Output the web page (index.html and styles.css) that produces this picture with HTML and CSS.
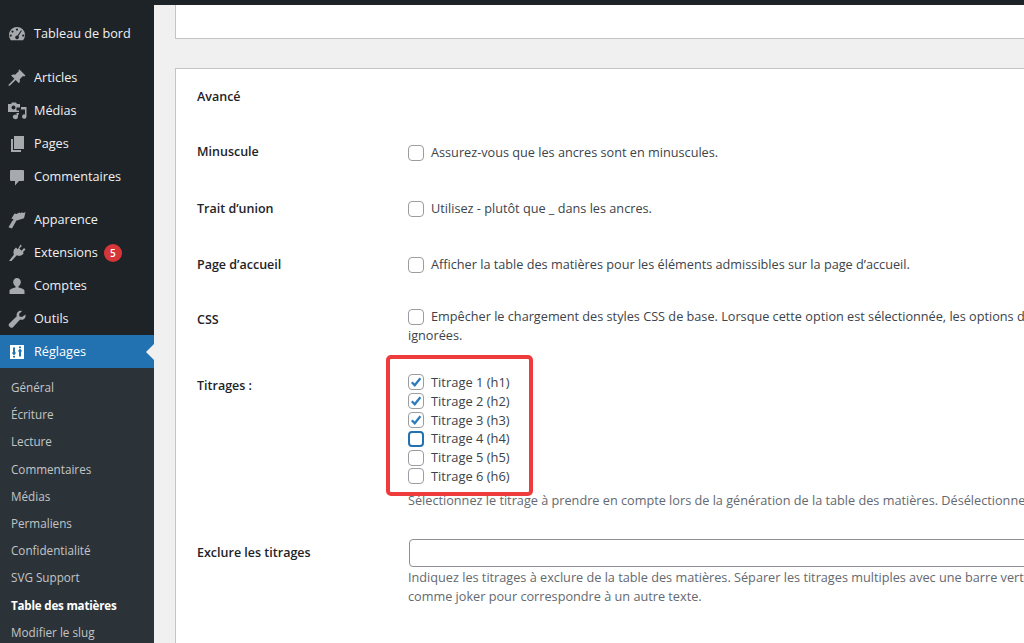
FILE: index.html
```html
<!DOCTYPE html>
<html>

	<head>
		<meta charset="UTF-8">
		<title>Table des matières</title>
		<link rel="stylesheet" href="styles.css">
	</head>

	<body>
		<div class="topBar"></div>
		<div class="wrap">
			<div class="sideMenu">
				<div class="menuGroup">
					<div class="menuItem">
						<svg class="menuIcon" viewBox="0 0 20 20"><path d="M10 3a8 8 0 0 0-8 8c0 2 .7 3.800 1.900 5.200h12.200A8 8 0 0 0 18 11a8 8 0 0 0-8-8zM10 4.500a1.100 1.100 0 1 1 0 2.200 1.100 1.100 0 0 1 0-2.200zM5.500 6.500a1.100 1.100 0 1 1 0 2.200 1.100 1.100 0 0 1 0-2.200zM3.800 10.500a1.100 1.100 0 1 1 0 2.200 1.100 1.100 0 0 1 0-2.200zM16.200 10.500a1.100 1.100 0 1 1 0 2.200 1.100 1.100 0 0 1 0-2.200zM14 6.200l.9.600-3.400 5.300a1.900 1.900 0 1 1-1-.600z" fill-rule="evenodd"/></svg>
						<span>Tableau de bord</span>
					</div>
				</div>
				<div class="menuGroup">
					<div class="menuItem">
						<svg class="menuIcon" viewBox="0 0 20 20"><path d="M12.500 1.500l6 6-1.300 1.100-1.200-.6-3.300 3.300c.5 1.600.2 3-.8 4l-3.300-3.300-5.600 5.600-1.500.3.300-1.500 5.600-5.600-3.300-3.300c1-1 2.400-1.300 4-.8L12 3.100l-.6-1.200z"/></svg>
						<span>Articles</span>
					</div>
					<div class="menuItem">
						<svg class="menuIcon" viewBox="0 0 20 20"><path d="M1 3h3l1-1.500h4L10 3h3v3.500H9.500v3H12V11H1zM6.500 4.500a2 2 0 1 0 0 4 2 2 0 0 0 0-4zM8 18a2.200 2.200 0 1 1 1.500-3.800V12H12v1.500h-1v2.300A2.200 2.200 0 0 1 8 18zM14 6h5.500v9.500a2.200 2.200 0 1 1-1.500-2.100V8.500h-4z" fill-rule="evenodd"/></svg>
						<span>Médias</span>
					</div>
					<div class="menuItem">
						<svg class="menuIcon" viewBox="0 0 20 20"><path d="M7 2h10v13H7zM4 5h2v11h8v2H4z"/></svg>
						<span>Pages</span>
					</div>
					<div class="menuItem">
						<svg class="menuIcon" viewBox="0 0 20 20"><path d="M4 3h12a1 1 0 0 1 1 1v9a1 1 0 0 1-1 1h-4l-4 4.500V14H4a1 1 0 0 1-1-1V4a1 1 0 0 1 1-1z"/></svg>
						<span>Commentaires</span>
					</div>
				</div>
				<div class="menuGroup">
					<div class="menuItem">
						<svg class="menuIcon" viewBox="0 0 20 20"><path d="M7.500 3.500l2 .5 3-1.500 1 .8 1.500-1 1 .7 2.500-.8-1.500 6-8 2.500-.5 1.800-2.800-1 .8-2-2-1zM5.500 10.500l3.200 1.200L5 18.500l-3.500-1.300z"/></svg>
						<span>Apparence</span>
					</div>
					<div class="menuItem">
						<svg class="menuIcon" viewBox="0 0 20 20"><path d="M13.500 1.500l1.400 1.400-2.600 2.600 2.200 2.200 2.600-2.600 1.400 1.400-2.700 2.700 1 1-1 1c-1.800 1.800-4 2.100-6 1L4.500 18H2l5-6.500C6 9.500 6.300 7.300 8 5.500l1-1 1.800 1.700z"/></svg>
						<span>Extensions</span>
						<span class="countBadge">5</span>
					</div>
					<div class="menuItem">
						<svg class="menuIcon" viewBox="0 0 20 20"><path d="M10 2a3.800 3.800 0 0 1 3.800 4c0 2-1 3.500-2.300 4.300v1.300c3 .6 6 1.700 6 3.400V18h-15v-3c0-1.700 3-2.800 6-3.400v-1.300C7.200 9.500 6.200 8 6.200 6A3.800 3.800 0 0 1 10 2z"/></svg>
						<span>Comptes</span>
					</div>
					<div class="menuItem">
						<svg class="menuIcon" viewBox="0 0 20 20"><path d="M18.500 5.500c.4 2-.3 3.600-1.500 4.500-1.200.9-2.600 1-3.900.6L6 18.200c-.8.800-2 .8-2.800 0l-1-1c-.8-.8-.7-2 .1-2.800l7.500-7.100c-.4-1.300-.3-2.700.6-3.900C11.400 2.200 13 1.500 15 2l-3 3 .5 2.500 2.500.5z"/></svg>
						<span>Outils</span>
					</div>
					<div class="menuItem current">
						<svg class="menuIcon" viewBox="0 0 20 20"><path d="M3 3h14v14H3zM6 5.500v5H4.800L7 13.800l2.200-3.300H8v-5zM6 14v1.500h2V14zM12 14.500v-5h-1.200L13 6.200l2.200 3.300H14v5zM12 4.500V6h2V4.500z" fill-rule="evenodd"/></svg>
						<span>Réglages</span>
					</div>
				</div>
				<div class="subMenu">
					<div class="subItem">Général</div>
					<div class="subItem">Écriture</div>
					<div class="subItem">Lecture</div>
					<div class="subItem">Commentaires</div>
					<div class="subItem">Médias</div>
					<div class="subItem">Permaliens</div>
					<div class="subItem">Confidentialité</div>
					<div class="subItem">SVG Support</div>
					<div class="subItem active">Table des matières</div>
					<div class="subItem">Modifier le slug</div>
				</div>
			</div>

			<div class="content">
				<div class="card topCard"></div>
				<div class="card mainCard">
					<div class="cardTitle">Avancé</div>

					<div class="row rowTall">
						<div class="rowLabel first">Minuscule</div>
						<div class="rowField">
							<label class="check"><span class="box"></span>Assurez-vous que les ancres sont en minuscules.</label>
						</div>
					</div>
					<div class="row rowTall">
						<div class="rowLabel">Trait d’union</div>
						<div class="rowField">
							<label class="check"><span class="box"></span>Utilisez - plutôt que _ dans les ancres.</label>
						</div>
					</div>
					<div class="row rowHome">
						<div class="rowLabel">Page d’accueil</div>
						<div class="rowField">
							<label class="check"><span class="box"></span>Afficher la table des matières pour les éléments admissibles sur la page d’accueil.</label>
						</div>
					</div>
					<div class="row rowCss">
						<div class="rowLabel lower">CSS</div>
						<div class="rowField">
							<label class="check"><span class="box"></span>Empêcher le chargement des styles CSS de base. Lorsque cette option est sélectionnée, les options de présentation seront</label>
							<div>ignorées.</div>
						</div>
					</div>
					<div class="row rowHeads">
						<div class="rowLabel lower">Titrages :</div>
						<div class="rowField">
							<div class="headList">
								<label class="check tight"><span class="box"><svg viewBox="0 0 16 16"><path d="M3.200 8.200l3.400 3.600 6.400-8"/></svg></span>Titrage 1 (h1)</label>
								<label class="check tight"><span class="box"><svg viewBox="0 0 16 16"><path d="M3.200 8.200l3.400 3.600 6.400-8"/></svg></span>Titrage 2 (h2)</label>
								<label class="check tight"><span class="box"><svg viewBox="0 0 16 16"><path d="M3.200 8.200l3.400 3.600 6.400-8"/></svg></span>Titrage 3 (h3)</label>
								<label class="check tight"><span class="box focus"></span>Titrage 4 (h4)</label>
								<label class="check tight"><span class="box"></span>Titrage 5 (h5)</label>
								<label class="check tight"><span class="box"></span>Titrage 6 (h6)</label>
								<div class="redFrame"></div>
							</div>
							<div class="hint">Sélectionnez le titrage à prendre en compte lors de la génération de la table des matières. Désélectionnez les titrages à exclure.</div>
						</div>
					</div>
					<div class="row">
						<div class="rowLabel exclude">Exclure les titrages</div>
						<div class="rowField">
							<div class="textInput"></div>
							<div class="hint joined">Indiquez les titrages à exclure de la table des matières. Séparer les titrages multiples avec une barre verticale | et utilisez *<br>comme joker pour correspondre à un autre texte.</div>
						</div>
					</div>
				</div>
			</div>
		</div>
	</body>

</html>
```
FILE: styles.css
```css
html,
body {
	height: 643px;
	overflow: hidden;
}

body {
	margin: 0;
	padding: 0;
	width: 1024px;
	background: #f0f0f1;
	color: #3c434a;
	font-family: "Open Sans", "Noto Sans", sans-serif;
	font-size: 12.7px;
	line-height: 19px;
}

.topBar {
	height: 5px;
	background: #1d2327;
}

.wrap {
	display: flex;
	height: 638px;
}

.sideMenu {
	width: 154px;
	flex: none;
	background: #1d2327;
	color: #f0f0f1;
	overflow: hidden;
}

.menuGroup {
	margin-bottom: 10px;
}

.menuGroup:first-child {
	padding-top: 12px;
	margin-bottom: 11px;
}

.menuGroup:nth-child(3) {
	margin-bottom: 0;
}

.menuItem {
	height: 33px;
	display: flex;
	align-items: center;
	padding-left: 7px;
	position: relative;
}

.menuIcon {
	width: 20px;
	height: 20px;
	margin-right: 7px;
	fill: #a7aaad;
	flex: none;
}

.countBadge {
	width: 18px;
	height: 18px;
	margin-left: 6px;
	border-radius: 50%;
	background: #d63638;
	color: #fff;
	font-size: 10px;
	font-weight: 600;
	line-height: 18px;
	text-align: center;
}

.current {
	background: #2271b1;
	color: #fff;
}

.current .menuIcon {
	fill: #fff;
}

.current::after {
	content: "";
	position: absolute;
	right: 0;
	top: 9px;
	border: 8px solid transparent;
	border-right-color: #f0f0f1;
	border-left: 0;
}

.subMenu {
	background: #2c3338;
	padding-top: 6px;
	height: 300px;
}

.subItem {
	height: 27.200px;
	line-height: 27px;
	padding-left: 11px;
	font-size: 11.7px;
	color: #c3c4c7;
}

.subItem.active {
	color: #fff;
	font-size: 11.6px;
	font-weight: 700;
	letter-spacing: -.2px;
}

.content {
	flex: 1;
	padding-left: 21px;
	overflow: hidden;
}

.card {
	width: 1100px;
	background: #fff;
	border: 1px solid #c3c4c7;
	box-sizing: border-box;
}

.topCard {
	height: 34px;
	border-top: 0;
	margin-bottom: 29px;
}

.mainCard {
	height: 700px;
	padding-top: 18px;
}

.cardTitle {
	height: 56px;
	padding-left: 21px;
	font-size: 12.5px;
	font-weight: 600;
	color: #1d2327;
}

.row {
	display: flex;
}

.rowLabel {
	width: 211px;
	flex: none;
	padding-left: 21px;
	font-size: 12.5px;
	font-weight: 600;
	color: #1d2327;
}

.rowLabel.first {
	margin-top: -1px;
}

.rowLabel.lower {
	margin-top: 3px;
}

.rowLabel.exclude {
	margin-top: 4px;
}

.rowField {
	flex: 1;
}

.rowTall {
	height: 56px;
}

.rowHome {
	height: 52px;
}

.rowCss {
	height: 66px;
}

.rowHeads {
	height: 166px;
}

.check {
	display: flex;
	align-items: center;
	height: 19px;
	white-space: nowrap;
}

.check.tight {
	height: 18.800px;
	font-size: 12.900px;
}

.box {
	width: 16px;
	height: 16px;
	margin-right: 7px;
	flex: none;
	border: 1px solid #9a9da1;
	border-radius: 4px;
	background: #fff;
	box-sizing: border-box;
}

.box svg {
	display: block;
	width: 14px;
	height: 14px;
	fill: none;
	stroke: #2c7cbd;
	stroke-width: 2.600;
}

.box.focus {
	border: 2px solid #2271b1;
}

.headList {
	position: relative;
	width: 130px;
}

.redFrame {
	position: absolute;
	left: -22px;
	top: -18px;
	width: 147px;
	height: 141px;
	border: 4px solid #ee3b3b;
	border-radius: 5px;
	box-sizing: border-box;
}

.hint {
	margin-top: 5px;
	white-space: nowrap;
	color: #646970;
}

.hint.joined {
	margin-top: 1px;
}

.textInput {
	width: 700px;
	height: 28px;
	margin-left: 1px;
	border: 1px solid #8c8f94;
	border-radius: 4px;
	background: #fff;
	box-sizing: border-box;
}
```
